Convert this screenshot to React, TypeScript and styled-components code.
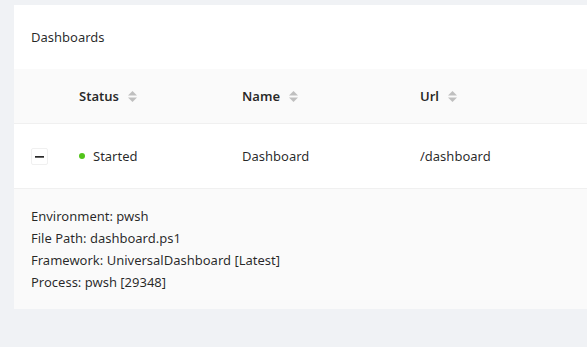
import React from 'react';
import styled, {createGlobalStyle} from "styled-components";

const GlobalStyle = createGlobalStyle`
    html, body {
        margin: 0;
        background: #f0f2f5;
        font-family: "Segoe UI", "Noto Sans", sans-serif;
        font-size: 13px;
        color: rgba(0, 0, 0, 0.85);
    }
`

const columns = '49px 163px 178px 1fr'

const details = [
    'Environment: pwsh',
    'File Path: dashboard.ps1',
    'Framework: UniversalDashboard [Latest]',
    'Process: pwsh [29348]',
]

const SortIcon = () => (
    <SortWrap>
        <svg width="9" height="11" viewBox="0 0 9 11">
            <path d="M4.5 0 L9 4.5 L0 4.5 Z" fill="#bfbfbf"/>
            <path d="M4.5 11 L9 6.5 L0 6.5 Z" fill="#bfbfbf"/>
        </svg>
    </SortWrap>
)

export default function App() {
    return (
        <>
            <GlobalStyle/>
            <Page>
                <Card>
                    <CardHead>Dashboards</CardHead>
                    <HeadRow>
                        <Cell/>
                        <HeadCell>Status<SortIcon/></HeadCell>
                        <HeadCell>Name<SortIcon/></HeadCell>
                        <HeadCell>Url<SortIcon/></HeadCell>
                    </HeadRow>
                    <BodyRow>
                        <Cell>
                            <ExpandButton aria-label="collapse"/>
                        </Cell>
                        <Cell>
                            <Dot/>Started
                        </Cell>
                        <Cell>Dashboard</Cell>
                        <Cell>/dashboard</Cell>
                    </BodyRow>
                    <Expanded>
                        {details.map(d => <DetailLine key={d}>{d}</DetailLine>)}
                    </Expanded>
                </Card>
            </Page>
        </>
    );
};

const Page = styled.div`
    padding: 5px 0 0 14px;
    height: 342px;
    overflow: hidden;
`
const Card = styled.div`
    background: #fff;
    width: 600px;
`
const CardHead = styled.div`
    height: 64px;
    display: flex;
    align-items: center;
    padding-left: 17px;
    line-height: 22px;
`
const HeadRow = styled.div`
    display: grid;
    grid-template-columns: ${columns};
    height: 54px;
    background: #fafafa;
    border-bottom: 1px solid #f0f0f0;
`
const BodyRow = styled.div`
    display: grid;
    grid-template-columns: ${columns};
    height: 64px;
    border-bottom: 1px solid #f0f0f0;
`
const Cell = styled.div`
    display: flex;
    align-items: center;
    padding-left: 16px;
    line-height: 22px;
`
const HeadCell = styled(Cell)`
    font-weight: 600;
`
const SortWrap = styled.span`
    display: inline-flex;
    margin-left: 9px;
    margin-top: 1px;
`
const ExpandButton = styled.button`
    position: relative;
    width: 17px;
    height: 17px;
    padding: 0;
    margin-left: 1px;
    border: 1px solid #f0f0f0;
    border-radius: 2px;
    background: #fff;
    &::after {
        content: '';
        position: absolute;
        left: 3px;
        right: 3px;
        top: 7px;
        height: 1px;
        background: rgba(0, 0, 0, 0.6);
        border-top: 1px solid rgba(0, 0, 0, 0.6);
    }
`
const Dot = styled.span`
    width: 6px;
    height: 6px;
    border-radius: 50%;
    background: #52c41a;
    margin-right: 8px;
`
const Expanded = styled.div`
    background: #fafafa;
    padding: 16px 17px;
`
const DetailLine = styled.div`
    line-height: 22px;
`
